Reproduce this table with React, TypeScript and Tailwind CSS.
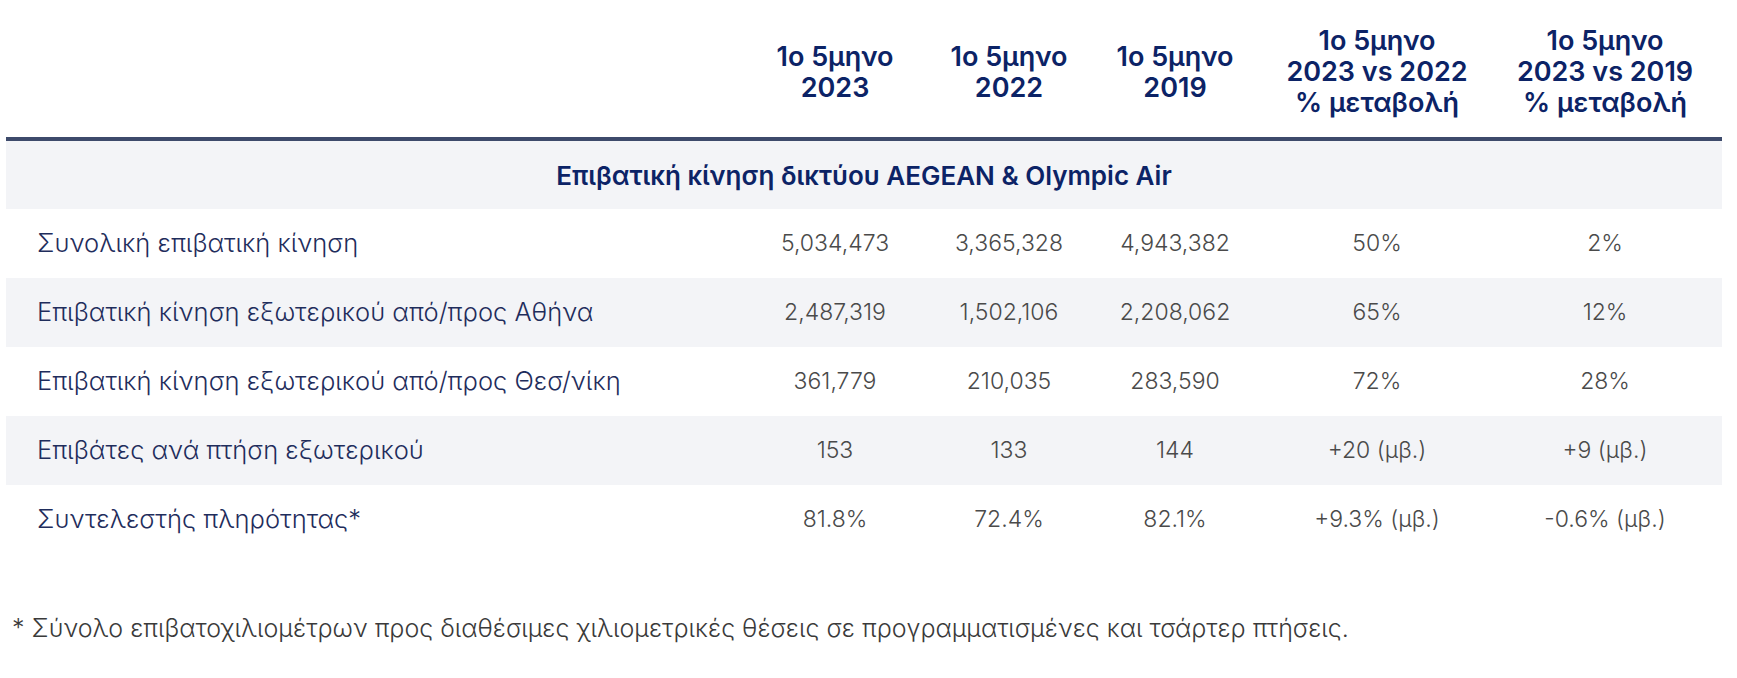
const cols = "grid grid-cols-[730px_198px_150px_182px_222px_234px]";

const headers = [
  ["1o 5μηνο", "2023"],
  ["1o 5μηνο", "2022"],
  ["1o 5μηνο", "2019"],
  ["1o 5μηνο", "2023 vs 2022", "% μεταβολή"],
  ["1o 5μηνο", "2023 vs 2019", "% μεταβολή"],
];

const rows = [
  ["Συνολική επιβατική κίνηση", "5,034,473", "3,365,328", "4,943,382", "50%", "2%"],
  ["Επιβατική κίνηση εξωτερικού από/προς Αθήνα", "2,487,319", "1,502,106", "2,208,062", "65%", "12%"],
  ["Επιβατική κίνηση εξωτερικού από/προς Θεσ/νίκη", "361,779", "210,035", "283,590", "72%", "28%"],
  ["Επιβάτες ανά πτήση εξωτερικού", "153", "133", "144", "+20 (μβ.)", "+9 (μβ.)"],
  ["Συντελεστής πληρότητας*", "81.8%", "72.4%", "82.1%", "+9.3% (μβ.)", "-0.6% (μβ.)"],
];

export default function App() {
  return (
    <div className="w-[1737px] h-[678px] bg-white pl-[6px] font-['Inter','Noto_Sans',sans-serif]">
      <div className="w-[1716px]">
        {/* header */}
        <div className={`${cols} h-[141px] border-b-4 border-[#3d4a6b]`}>
          <div />
          {headers.map((h, i) => (
            <div
              key={i}
              className="flex flex-col items-center justify-center pt-[6px] text-center text-[27px] leading-[31px] font-semibold text-[#0c2366]"
            >
              {h.map((line) => (
                <span key={line}>{line}</span>
              ))}
            </div>
          ))}
        </div>

        {/* section title */}
        <div className="flex h-[68px] items-center justify-center bg-[#f3f4f7] text-[26px] font-semibold text-[#0c2366]">
          Επιβατική κίνηση δικτύου AEGEAN &amp; Olympic Air
        </div>

        {rows.map((r, i) => (
          <div
            key={i}
            className={`${cols} h-[69px] items-center text-[23px] font-light ${
              i % 2 === 1 ? "bg-[#f3f4f7]" : "bg-white"
            }`}
          >
            <div className="pl-[31px] text-[25.5px] text-[#1f2d5c]">{r[0]}</div>
            {r.slice(1).map((v, j) => (
              <div key={j} className="text-center text-[#4a4a4a]">
                {v}
              </div>
            ))}
          </div>
        ))}
      </div>

      <div className="mt-[56px] pl-[6px] text-[25px] font-light text-[#3a3a3a]">
        * Σύνολο επιβατοχιλιομέτρων προς διαθέσιμες χιλιομετρικές θέσεις σε προγραμματισμένες και τσάρτερ πτήσεις.
      </div>
    </div>
  );
}
